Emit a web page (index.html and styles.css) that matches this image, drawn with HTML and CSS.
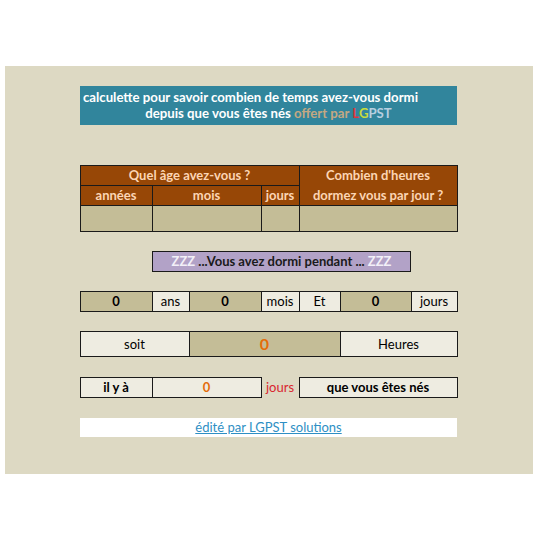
FILE: index.html
```html
<!DOCTYPE html>
<html lang="fr">
<head>
<meta charset="utf-8">
<title>calculette</title>
<link rel="stylesheet" href="styles.css">
</head>
<body>
<div class="panel">
  <div class="title">
    <div class="t1">calculette pour savoir combien de temps avez-vous dormi</div>
    <div class="t2">depuis que vous êtes nés <span class="offert">offert par </span><span class="l">L</span><span class="g">G</span><span class="pst">PST</span></div>
  </div>

  <table class="tbl input">
    <colgroup><col class="c72"><col class="c109"><col class="c38"><col class="c158"></colgroup>
    <tr class="h1"><th colspan="3">Quel âge avez-vous ?</th><th>Combien d'heures</th></tr>
    <tr class="h2"><th>années</th><th>mois</th><th>jours</th><th class="nb">dormez vous par jour ?</th></tr>
    <tr class="in"><td></td><td></td><td></td><td></td></tr>
  </table>

  <div class="zzz"><span class="z">ZZZ</span> ...Vous avez dormi pendant ... <span class="z">ZZZ</span></div>

  <table class="tbl r4">
    <colgroup><col class="c72"><col class="c37"><col class="c72"><col class="c38"><col class="c41"><col class="c71"><col class="c46"></colgroup>
    <tr><td class="dk b">0</td><td class="lt">ans</td><td class="dk b">0</td><td class="lt">mois</td><td class="lt">Et</td><td class="dk b">0</td><td class="lt">jours</td></tr>
  </table>

  <table class="tbl r5">
    <colgroup><col class="c109"><col class="c151"><col class="c117"></colgroup>
    <tr><td class="lt">soit</td><td class="dk big">0</td><td class="lt">Heures</td></tr>
  </table>

  <table class="tbl r6">
    <colgroup><col class="c72"><col class="c109"><col class="c38"><col class="c158"></colgroup>
    <tr><td class="lt b">il y à</td><td class="lt org">0</td><td class="red">jours</td><td class="lt b">que vous êtes nés</td></tr>
  </table>

  <div class="foot"><a href="#">édité par LGPST solutions</a></div>
</div>
</body>
</html>
```
FILE: styles.css
```css
html, body { margin: 0; padding: 0; background: #ffffff; }
body { font-family: Lato, "Open Sans", "Liberation Sans", sans-serif; font-size: 13px; color: #000; }
.panel {
  margin: 66px 0 0 5px;
  width: 528px;
  height: 408px;
  background: #ddd9c3;
  box-sizing: border-box;
  padding: 20px 0 0 75px;
}
.title {
  width: 377px;
  height: 39px;
  background: #31859c;
  color: #ffffff;
  font-weight: bold;
  font-size: 13.2px;
  line-height: 16px;
  box-sizing: border-box;
  padding-top: 3px;
}
.t1 { padding-left: 3px; }
.t2 { text-align: center; }
.offert { color: #c4a882; }
.l { color: #e0353a; }
.g { color: #c8dc3c; }
.pst { color: #b7cfe0; }

.tbl {
  border-collapse: collapse;
  table-layout: fixed;
  width: 378px;
  margin-left: -0.5px;
}
.tbl td, .tbl th {
  border: 1px solid #1a1a1a;
  padding: 0;
  text-align: center;
  overflow: hidden;
  white-space: nowrap;
}
.c72 { width: 72px; }
.c109 { width: 109px; }
.c38 { width: 38px; }
.c158 { width: 158px; }
.c37 { width: 37px; }
.c41 { width: 41px; }
.c71 { width: 71px; }
.c46 { width: 46px; }
.c151 { width: 151px; }
.c117 { width: 117px; }

.input { margin-top: 40px; }
.input th {
  background: #974706;
  color: #fcd5b4;
  font-weight: bold;
  height: 19px;
  line-height: 19px;
}
.input .h1 th:last-child { border-bottom: none; }
.input .h2 th.nb { border-top: none; }
.input .in td { background: #c4bd97; height: 25px; }

.zzz {
  margin: 19px 0 0 72px;
  width: 259px;
  height: 21px;
  box-sizing: border-box;
  border: 1px solid #1a1a1a;
  background: #b2a2c7;
  text-align: center;
  font-weight: bold;
  line-height: 19px;
  color: #1a1a1a;
}
.z { color: #f3f0f8; }

.r4 { margin-top: 19px; }
.r4 td { height: 19px; line-height: 19px; }
.r5 { margin-top: 19px; }
.r5 td { height: 24px; line-height: 24px; }
.r6 { margin-top: 20px; }
.r6 td { height: 19px; line-height: 19px; }
.dk { background: #c4bd97; }
.lt { background: #eeece1; }
.b { font-weight: bold; }
.big { color: #e46c0a; font-weight: bold; font-size: 16px; }
.org { color: #e46c0a; font-weight: bold; }
.tbl td.red { border: none; color: #d9262e; background: transparent; }

.foot {
  margin-top: 20px;
  width: 377px;
  height: 19px;
  background: #ffffff;
  text-align: center;
  line-height: 19px;
}
.foot a { color: #2e8fc4; text-decoration: underline; }
```
